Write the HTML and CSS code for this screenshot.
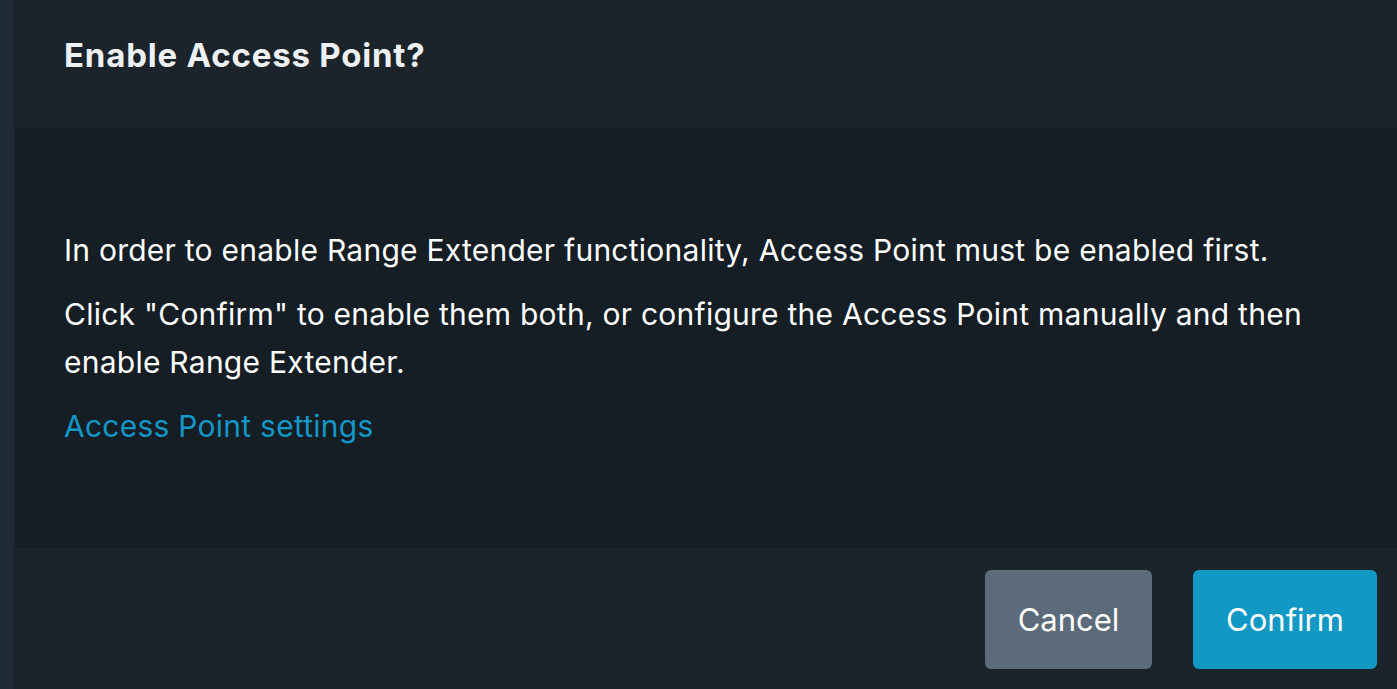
FILE: index.html
```
<!DOCTYPE html>
<html>

<head>
  <title>Enable Access Point?</title>
  <link rel="stylesheet" href="styles.css">
</head>

<body>
  <div class="page">
    <div class="sidebar"></div>
    <div class="dialog">
      <div class="dialog-header">
        <h2 class="dialog-title">Enable Access Point?</h2>
      </div>
      <div class="dialog-body">
        <p>In order to enable Range Extender functionality, Access Point must be enabled first.</p>
        <p>Click "Confirm" to enable them both, or configure the Access Point manually and then enable Range Extender.</p>
        <a class="link" href="#">Access Point settings</a>
      </div>
      <div class="dialog-footer">
        <button class="btn btn-cancel">Cancel</button>
        <button class="btn btn-confirm">Confirm</button>
      </div>
    </div>
  </div>
</body>

</html>
```

FILE: styles.css
```
body {
  margin: 0;
  background-color: #1b232b;
  font-family: Inter, "Noto Sans", sans-serif;
  color: #ffffff;
}

.page {
  display: flex;
  height: 689px;
}

.sidebar {
  width: 15px;
  background: linear-gradient(to right, #1f2b35 0, #1f2b35 11px, #1c252e 15px);
}

.dialog {
  flex: 1;
  display: flex;
  flex-direction: column;
}

.dialog-header {
  height: 128px;
  padding: 0 49px;
  background-color: #1b232b;
}

.dialog-title {
  margin: 0;
  padding-top: 33px;
  font-size: 33px;
  font-weight: 700;
  line-height: 44px;
  letter-spacing: 0.8px;
  color: #eef1f4;
}

.dialog-body {
  height: 420px;
  box-sizing: border-box;
  padding: 98px 49px 0;
  background-color: #151d25;
}

.dialog-body p {
  margin: 0 0 16px;
  font-size: 30px;
  line-height: 48px;
  letter-spacing: 0.25px;
  max-width: 1280px;
}

.link {
  display: block;
  font-size: 30px;
  line-height: 48px;
  letter-spacing: 0.25px;
  color: #1496c6;
  text-decoration: none;
}

.dialog-footer {
  flex: 1;
  display: flex;
  justify-content: flex-end;
  align-items: flex-start;
  gap: 41px;
  padding: 22px 20px 0;
  background-color: #1b232b;
}

.btn {
  height: 99px;
  border: none;
  border-radius: 6px;
  font-family: Inter, "Noto Sans", sans-serif;
  font-size: 31px;
  color: #ffffff;
  cursor: pointer;
}

.btn-cancel {
  width: 167px;
  background-color: #5c6b79;
}

.btn-confirm {
  width: 184px;
  background-color: #1198c4;
}
```
